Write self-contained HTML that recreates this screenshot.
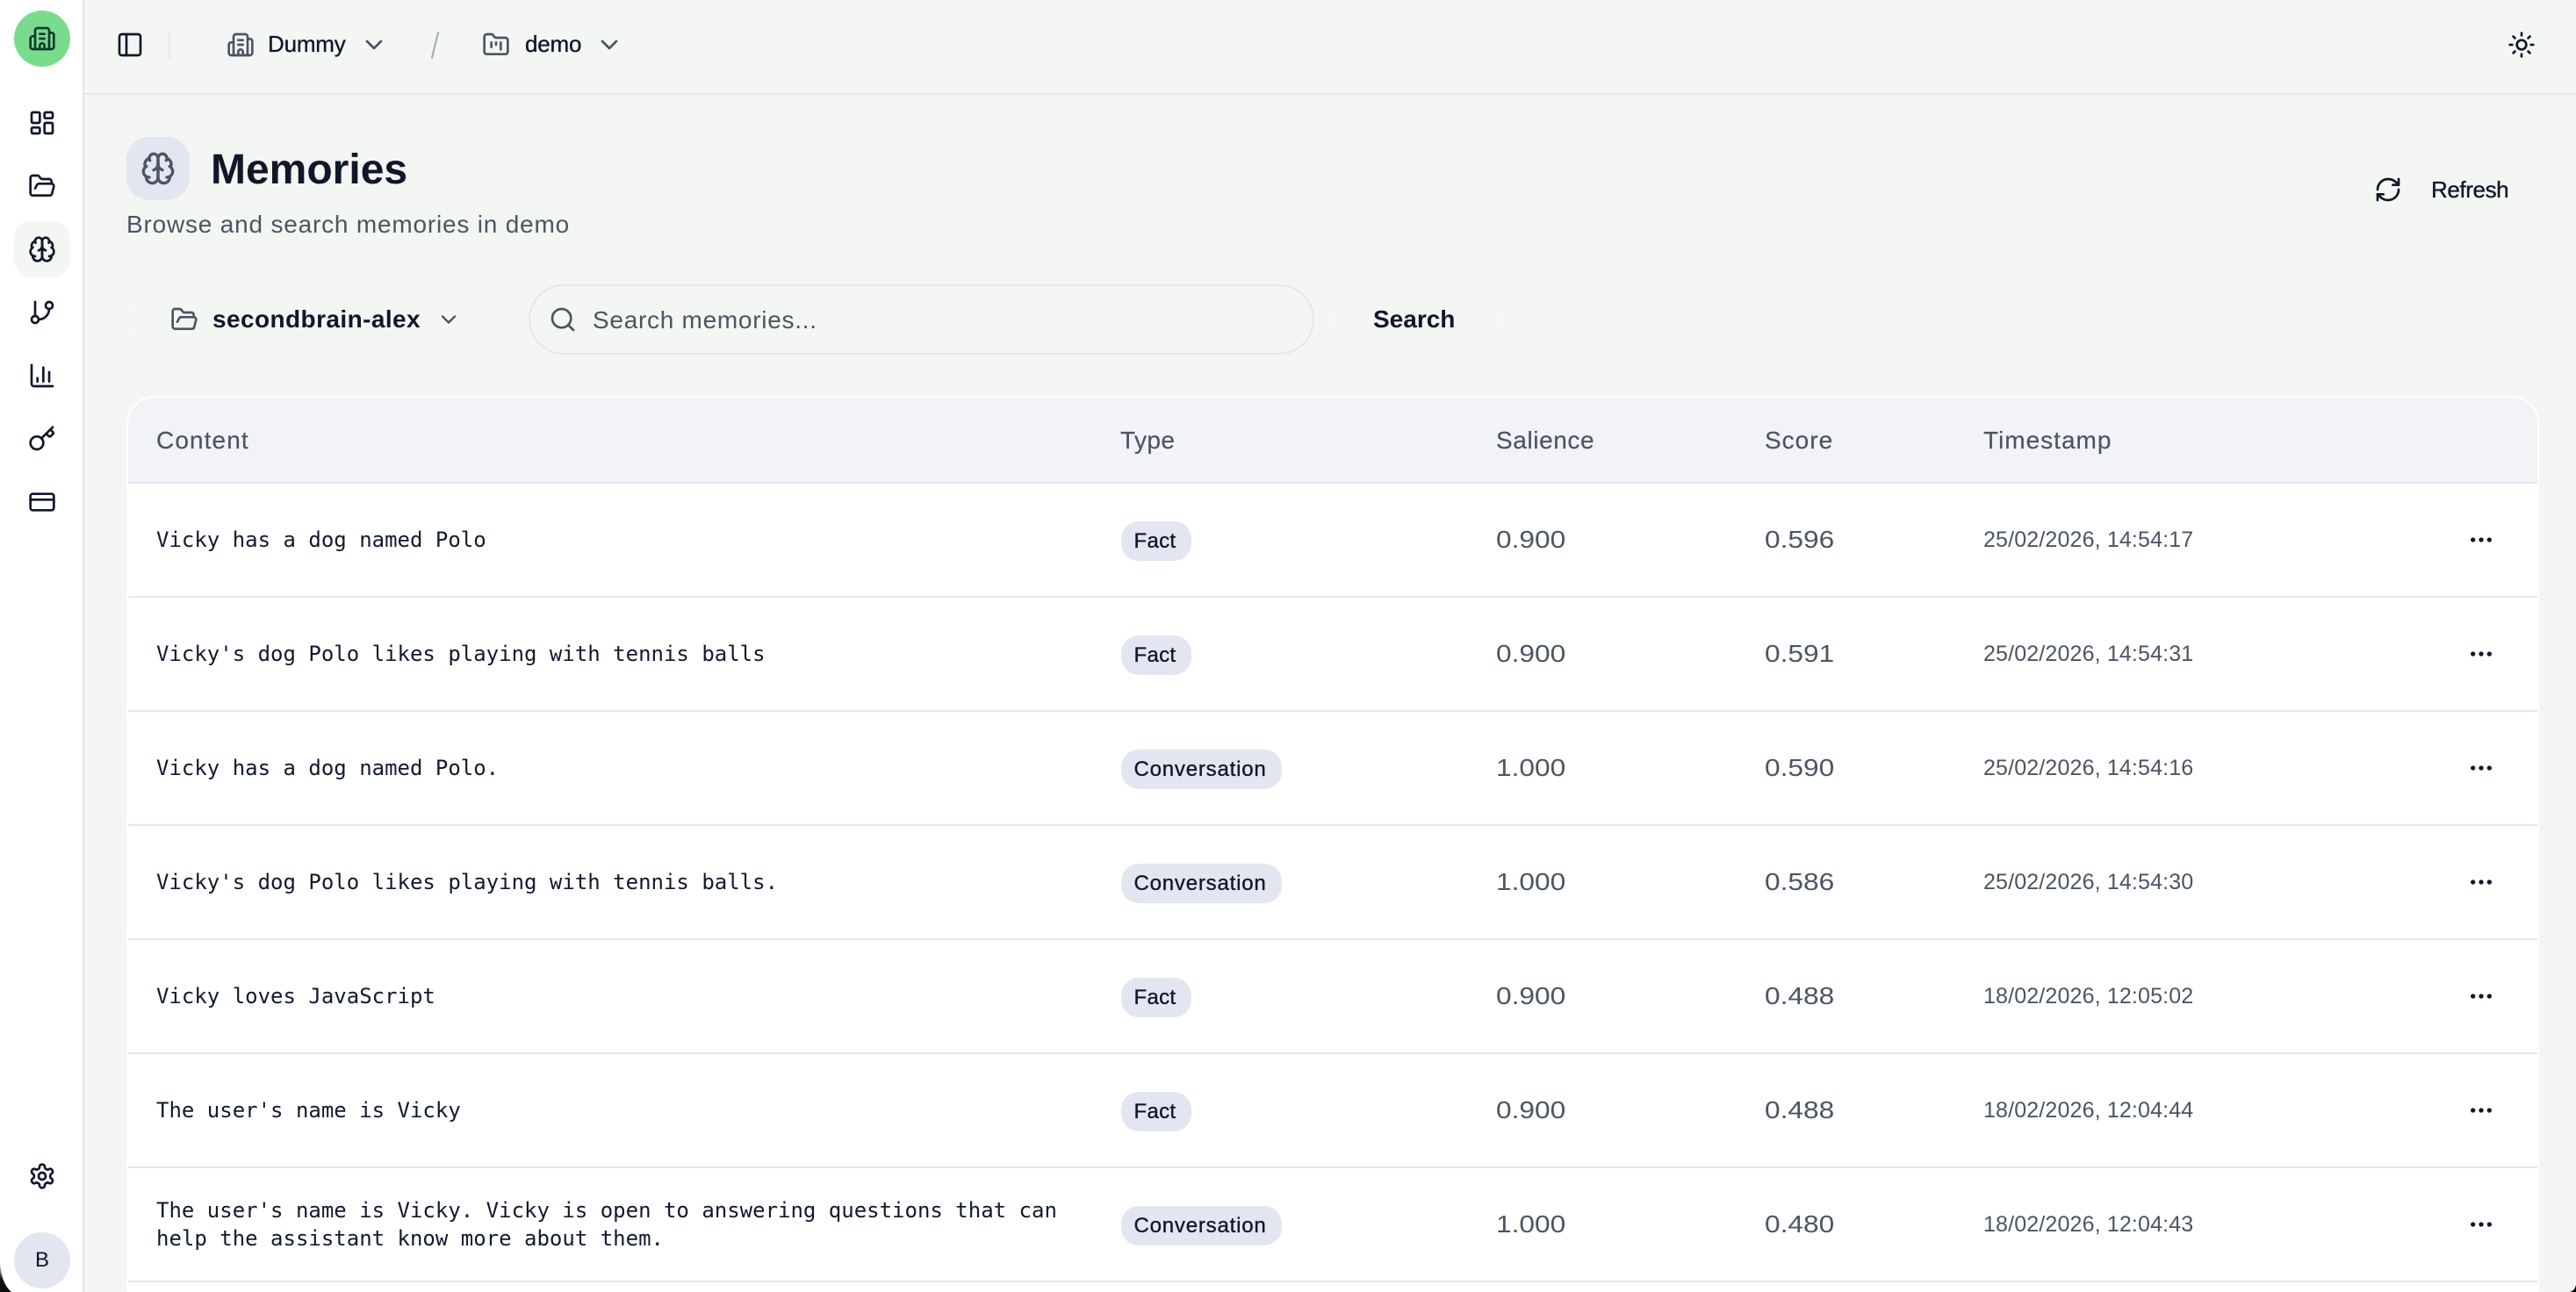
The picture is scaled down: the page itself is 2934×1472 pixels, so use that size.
<!DOCTYPE html>
<html lang="en">
<head>
<meta charset="utf-8">
<title>Memories</title>
<style>
html,body{margin:0;padding:0;width:2934px;height:1472px;overflow:hidden;background:#f4f6f3}
body{position:relative;font-family:"Liberation Sans",sans-serif;color:#0f172a}
.a{position:absolute}
.t{position:absolute;white-space:nowrap;line-height:1}
svg.i{position:absolute;fill:none;stroke:currentColor;stroke-width:2;stroke-linecap:round;stroke-linejoin:round;overflow:visible}
.s32{width:32px;height:32px}
.g{color:#4b5563}
.m{-webkit-text-stroke:.35px currentColor}
.side{left:0;top:0;width:94px;height:1472px;background:#fff;border-right:2px solid #e2e6f0}
.top{left:96px;top:0;width:2838px;height:106px;border-bottom:2px solid #e2e6f0}
.pill{border:2px solid #f6f8f5;border-radius:40px;box-sizing:border-box}
.card{left:144px;top:451px;width:2748px;height:1030px;background:#fff;border:2px solid #fff;border-radius:32px 32px 0 0;box-sizing:border-box}
.head{left:146px;top:453px;width:2744px;height:96px;background:#f1f3f7;border-bottom:2px solid #e2e6f0;border-radius:30px 30px 0 0}
.th{font-size:28px;color:#4b5563;top:488px;-webkit-text-stroke:.2px currentColor}
.row{position:absolute;left:146px;width:2744px;height:128px;border-bottom:2px solid #e2e6f0}
.c{font-family:"DejaVu Sans Mono","Liberation Mono",monospace;font-size:24px;line-height:32px;color:#111a2e;position:absolute;left:32px;top:48px;white-space:nowrap}
.b{position:absolute;left:1130.5px;top:43px;height:45px;border-radius:20px;background:#e2e6f0;font-size:24px;line-height:1;color:#0f172a}
.b span{position:absolute;left:15px;top:11px;white-space:nowrap;-webkit-text-stroke:.35px currentColor}
.f{width:80px}.f span{letter-spacing:.3px}
.v{width:183px}.v span{letter-spacing:.8px}
.n{position:absolute;top:50px;font-size:28px;line-height:1;color:#4b5563;transform:scaleX(1.13);transform-origin:0 50%;white-space:nowrap}
.sa{left:1558px}.sc{left:1864px}
.ts{position:absolute;left:2113px;top:52px;font-size:25px;line-height:1;letter-spacing:.15px;color:#4b5563;white-space:nowrap}
</style>
</head>
<body>
<svg width="0" height="0" style="position:absolute">
<defs>
<symbol id="dash" viewBox="0 0 24 24"><rect x="3" y="3" width="7" height="9" rx="1"/><rect x="14" y="3" width="7" height="5" rx="1"/><rect x="14" y="12" width="7" height="9" rx="1"/><rect x="3" y="16" width="7" height="5" rx="1"/></symbol>
<symbol id="fopen" viewBox="0 0 24 24"><path d="m6 14 1.5-2.9A2 2 0 0 1 9.24 10H20a2 2 0 0 1 1.94 2.5l-1.54 6a2 2 0 0 1-1.95 1.5H4a2 2 0 0 1-2-2V5a2 2 0 0 1 2-2h3.9a2 2 0 0 1 1.69.9l.81 1.2a2 2 0 0 0 1.67.9H18a2 2 0 0 1 2 2v2"/></symbol>
<symbol id="brain" viewBox="0 0 24 24"><path d="M12 5a3 3 0 1 0-5.997.125 4 4 0 0 0-2.526 5.77 4 4 0 0 0 .556 6.588A4 4 0 1 0 12 18Z"/><path d="M12 5a3 3 0 1 1 5.997.125 4 4 0 0 1 2.526 5.77 4 4 0 0 1-.556 6.588A4 4 0 1 1 12 18Z"/><path d="M15 13a4.5 4.5 0 0 1-3-4 4.5 4.5 0 0 1-3 4"/><path d="M17.599 6.5a3 3 0 0 0 .399-1.375"/><path d="M6.003 5.125A3 3 0 0 0 6.401 6.5"/><path d="M3.477 10.896a4 4 0 0 1 .585-.396"/><path d="M19.938 10.5a4 4 0 0 1 .585.396"/><path d="M6 18a4 4 0 0 1-1.967-.516"/><path d="M19.967 17.484A4 4 0 0 1 18 18"/></symbol>
<symbol id="git" viewBox="0 0 24 24"><path d="M6 3v12"/><circle cx="18" cy="6" r="3"/><circle cx="6" cy="18" r="3"/><path d="M18 9a9 9 0 0 1-9 9"/></symbol>
<symbol id="chart" viewBox="0 0 24 24"><path d="M3 3v16a2 2 0 0 0 2 2h16"/><path d="M18 17V9"/><path d="M13 17V5"/><path d="M8 17v-3"/></symbol>
<symbol id="key" viewBox="0 0 24 24"><path d="m15.5 7.5 2.3 2.3a1 1 0 0 0 1.4 0l2.1-2.1a1 1 0 0 0 0-1.4L19 4"/><path d="m21 2-9.6 9.6"/><circle cx="7.5" cy="15.5" r="5.5"/></symbol>
<symbol id="cardi" viewBox="0 0 24 24"><rect x="2" y="5" width="20" height="14" rx="2"/><path d="M2 10h20"/></symbol>
<symbol id="gear" viewBox="0 0 24 24"><path d="M12.22 2h-.44a2 2 0 0 0-2 2v.18a2 2 0 0 1-1 1.73l-.43.25a2 2 0 0 1-2 0l-.15-.08a2 2 0 0 0-2.73.73l-.22.38a2 2 0 0 0 .73 2.73l.15.1a2 2 0 0 1 1 1.72v.51a2 2 0 0 1-1 1.74l-.15.09a2 2 0 0 0-.73 2.73l.22.38a2 2 0 0 0 2.73.73l.15-.08a2 2 0 0 1 2 0l.43.25a2 2 0 0 1 1 1.73V20a2 2 0 0 0 2 2h.44a2 2 0 0 0 2-2v-.18a2 2 0 0 1 1-1.73l.43-.25a2 2 0 0 1 2 0l.15.08a2 2 0 0 0 2.73-.73l.22-.39a2 2 0 0 0-.73-2.73l-.15-.08a2 2 0 0 1-1-1.74v-.5a2 2 0 0 1 1-1.74l.15-.09a2 2 0 0 0 .73-2.73l-.22-.38a2 2 0 0 0-2.73-.73l-.15.08a2 2 0 0 1-2 0l-.43-.25a2 2 0 0 1-1-1.73V4a2 2 0 0 0-2-2z"/><circle cx="12" cy="12" r="3"/></symbol>
<symbol id="bld" viewBox="0 0 24 24"><path d="M10 12h4"/><path d="M10 8h4"/><path d="M14 21v-3a2 2 0 0 0-4 0v3"/><path d="M6 10H4a2 2 0 0 0-2 2v7a2 2 0 0 0 2 2h16a2 2 0 0 0 2-2V9a2 2 0 0 0-2-2h-2"/><path d="M6 21V5a2 2 0 0 1 2-2h8a2 2 0 0 1 2 2v16"/></symbol>
<symbol id="panel" viewBox="0 0 24 24"><rect x="3" y="3" width="18" height="18" rx="2"/><path d="M9 3v18"/></symbol>
<symbol id="fkan" viewBox="0 0 24 24"><path d="M4 20h16a2 2 0 0 0 2-2V8a2 2 0 0 0-2-2h-7.93a2 2 0 0 1-1.66-.9l-.82-1.2A2 2 0 0 0 7.93 3H4a2 2 0 0 0-2 2v13c0 1.1.9 2 2 2Z"/><path d="M8 10v4"/><path d="M12 10v2"/><path d="M16 10v6"/></symbol>
<symbol id="chev" viewBox="0 0 24 24"><path d="m6 9 6 6 6-6"/></symbol>
<symbol id="search" viewBox="0 0 24 24"><circle cx="11" cy="11" r="8"/><path d="m21 21-4.3-4.3"/></symbol>
<symbol id="refresh" viewBox="0 0 24 24"><path d="M3 12a9 9 0 0 1 9-9 9.75 9.75 0 0 1 6.74 2.74L21 8"/><path d="M21 3v5h-5"/><path d="M21 12a9 9 0 0 1-9 9 9.75 9.75 0 0 1-6.74-2.74L3 16"/><path d="M8 16H3v5"/></symbol>
<symbol id="sun" viewBox="0 0 24 24"><circle cx="12" cy="12" r="4"/><path d="M12 2v2"/><path d="M12 20v2"/><path d="m4.93 4.93 1.41 1.41"/><path d="m17.66 17.66 1.41 1.41"/><path d="M2 12h2"/><path d="M20 12h2"/><path d="m6.34 17.66-1.41 1.41"/><path d="m19.07 4.93-1.41 1.41"/></symbol>
<symbol id="dots" viewBox="0 0 24 24"><circle cx="12" cy="12" r="1"/><circle cx="19" cy="12" r="1"/><circle cx="5" cy="12" r="1"/></symbol>
</defs>
</svg>

<!-- sidebar -->
<div class="a side"></div>
<div class="a" style="left:16px;top:12px;width:64px;height:64px;border-radius:50%;background:#79dc8c"></div>
<svg class="i s32" style="left:32px;top:28px;color:#0f3b2e"><use href="#bld"/></svg>
<svg class="i s32" style="left:32px;top:124px"><use href="#dash"/></svg>
<svg class="i s32" style="left:32px;top:196px"><use href="#fopen"/></svg>
<div class="a" style="left:16px;top:252px;width:64px;height:64px;border-radius:20px;background:#f4f6f3"></div>
<svg class="i s32" style="left:32px;top:268px"><use href="#brain"/></svg>
<svg class="i s32" style="left:32px;top:340px"><use href="#git"/></svg>
<svg class="i s32" style="left:32px;top:412px"><use href="#chart"/></svg>
<svg class="i s32" style="left:32px;top:484px"><use href="#key"/></svg>
<svg class="i s32" style="left:32px;top:556px"><use href="#cardi"/></svg>
<svg class="i s32" style="left:32px;top:1324px"><use href="#gear"/></svg>
<div class="a" style="left:16px;top:1404px;width:64px;height:64px;border-radius:50%;background:#e2e6f0"></div>
<div class="t" style="left:40px;top:1424px;font-size:24px">B</div>

<!-- top bar -->
<div class="a top"></div>
<svg class="i s32" style="left:132px;top:35px"><use href="#panel"/></svg>
<div class="a" style="left:192px;top:35px;width:2px;height:32px;background:#e2e6f0"></div>
<svg class="i s32 g" style="left:258px;top:35px"><use href="#bld"/></svg>
<div class="t m" style="left:305px;top:37px;font-size:26px;letter-spacing:-.2px">Dummy</div>
<svg class="i s32 g" style="left:410px;top:35px"><use href="#chev"/></svg>
<svg class="a" style="left:488px;top:35px" width="14" height="34"><path d="M11 2 4 31" stroke="#a3a9b4" stroke-width="2" stroke-linecap="round" fill="none"/></svg>
<svg class="i s32 g" style="left:549px;top:35px"><use href="#fkan"/></svg>
<div class="t m" style="left:598px;top:37px;font-size:26px;letter-spacing:-.2px">demo</div>
<svg class="i s32 g" style="left:678px;top:35px"><use href="#chev"/></svg>
<svg class="i s32" style="left:2856px;top:35px"><use href="#sun"/></svg>

<!-- page header -->
<div class="a" style="left:144px;top:156px;width:72px;height:72px;border-radius:26px;background:#e2e6f0"></div>
<svg class="i g" style="left:160px;top:172px;width:40px;height:40px"><use href="#brain"/></svg>
<div class="t" style="left:240px;top:170px;font-size:48px;font-weight:700;color:#0f172a">Memories</div>
<div class="t g" style="left:144px;top:242px;font-size:28px;letter-spacing:.8px">Browse and search memories in demo</div>
<div class="a pill" style="left:2670px;top:184px;width:220px;height:62px"></div>
<svg class="i s32" style="left:2704px;top:200px"><use href="#refresh"/></svg>
<div class="t m" style="left:2769px;top:203px;font-size:26px;letter-spacing:-.4px">Refresh</div>

<!-- filters -->
<div class="a pill" style="left:146px;top:324px;width:430px;height:80px"></div>
<svg class="i s32 g" style="left:194px;top:348px"><use href="#fopen"/></svg>
<div class="t" style="left:242px;top:350px;font-size:28px;font-weight:700;letter-spacing:.42px">secondbrain-alex</div>
<svg class="i g" style="left:497px;top:350px;width:28px;height:28px"><use href="#chev"/></svg>
<div class="a" style="left:602px;top:324px;width:895px;height:80px;border:2px solid #e2e6f0;border-radius:40px;box-sizing:border-box"></div>
<svg class="i s32 g" style="left:625px;top:348px"><use href="#search"/></svg>
<div class="t g" style="left:675px;top:351px;font-size:28px;letter-spacing:.72px">Search memories...</div>
<div class="a pill" style="left:1516px;top:324px;width:193px;height:80px"></div>
<div class="t" style="left:1564px;top:350px;font-size:28px;font-weight:700">Search</div>

<!-- table -->
<div class="a card"></div>
<div class="a head"></div>
<div class="t th" style="left:178px;letter-spacing:1.1px">Content</div>
<div class="t th" style="left:1276px;letter-spacing:.4px">Type</div>
<div class="t th" style="left:1704px;letter-spacing:.6px">Salience</div>
<div class="t th" style="left:2010px;letter-spacing:1px">Score</div>
<div class="t th" style="left:2259px;letter-spacing:1px">Timestamp</div>

<div class="row" style="top:551px"><div class="c">Vicky has a dog named Polo</div><div class="b f"><span>Fact</span></div><div class="n sa">0.900</div><div class="n sc">0.596</div><div class="ts">25/02/2026, 14:54:17</div><svg class="i s32" style="left:2664px;top:48px"><use href="#dots"/></svg></div>
<div class="row" style="top:681px"><div class="c">Vicky's dog Polo likes playing with tennis balls</div><div class="b f"><span>Fact</span></div><div class="n sa">0.900</div><div class="n sc">0.591</div><div class="ts">25/02/2026, 14:54:31</div><svg class="i s32" style="left:2664px;top:48px"><use href="#dots"/></svg></div>
<div class="row" style="top:811px"><div class="c">Vicky has a dog named Polo.</div><div class="b v"><span>Conversation</span></div><div class="n sa">1.000</div><div class="n sc">0.590</div><div class="ts">25/02/2026, 14:54:16</div><svg class="i s32" style="left:2664px;top:48px"><use href="#dots"/></svg></div>
<div class="row" style="top:941px"><div class="c">Vicky's dog Polo likes playing with tennis balls.</div><div class="b v"><span>Conversation</span></div><div class="n sa">1.000</div><div class="n sc">0.586</div><div class="ts">25/02/2026, 14:54:30</div><svg class="i s32" style="left:2664px;top:48px"><use href="#dots"/></svg></div>
<div class="row" style="top:1071px"><div class="c">Vicky loves JavaScript</div><div class="b f"><span>Fact</span></div><div class="n sa">0.900</div><div class="n sc">0.488</div><div class="ts">18/02/2026, 12:05:02</div><svg class="i s32" style="left:2664px;top:48px"><use href="#dots"/></svg></div>
<div class="row" style="top:1201px"><div class="c">The user's name is Vicky</div><div class="b f"><span>Fact</span></div><div class="n sa">0.900</div><div class="n sc">0.488</div><div class="ts">18/02/2026, 12:04:44</div><svg class="i s32" style="left:2664px;top:48px"><use href="#dots"/></svg></div>
<div class="row" style="top:1331px"><div class="c" style="top:32px">The user's name is Vicky. Vicky is open to answering questions that can<br>help the assistant know more about them.</div><div class="b v"><span>Conversation</span></div><div class="n sa">1.000</div><div class="n sc">0.480</div><div class="ts">18/02/2026, 12:04:43</div><svg class="i s32" style="left:2664px;top:48px"><use href="#dots"/></svg></div>

<!-- window corners -->
<svg class="a" style="left:0;top:1430px" width="24" height="42"><defs><linearGradient id="cg" x1="0" y1="0" x2="0" y2="1"><stop offset="0" stop-color="#000" stop-opacity=".15"/><stop offset=".6" stop-color="#000" stop-opacity=".95"/></linearGradient></defs><path d="M0 8C1 24 5 35 13 42H0Z" fill="url(#cg)"/></svg>
<svg class="a" style="left:2924px;top:1462px" width="10" height="10"><path d="M10 2C9 6 7 9 3 10H10Z" fill="#000"/></svg>
</body>
</html>
